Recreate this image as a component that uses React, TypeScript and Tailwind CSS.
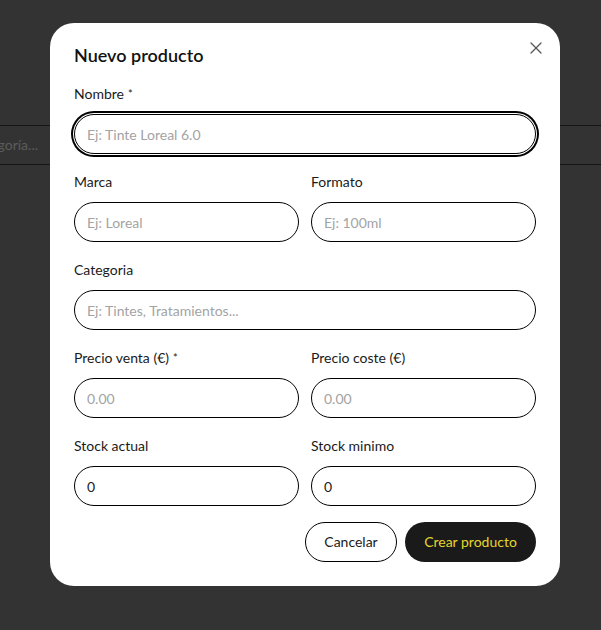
import { X } from "lucide-react";

const font = { fontFamily: "Lato, 'Open Sans', sans-serif" };

function Field({
  label,
  placeholder,
  value,
  required,
  focused,
}: {
  label: string;
  placeholder?: string;
  value?: string;
  required?: boolean;
  focused?: boolean;
}) {
  return (
    <div className="flex flex-col">
      <label className="mb-2.5 text-sm leading-5 text-[#1a1a1a]">
        {label}
        {required && <span className="ml-1 text-[11px] align-top">*</span>}
      </label>
      <input
        defaultValue={value}
        placeholder={placeholder}
        className={`h-10 w-full rounded-full border border-black bg-white px-3 text-sm text-[#222] placeholder:text-[#a3a3a3] outline-none ${
          focused ? "shadow-[0_0_0_1px_#fff,0_0_0_3px_#000]" : ""
        }`}
      />
    </div>
  );
}

export default function App() {
  return (
    <div className="relative h-[630px] w-full overflow-hidden bg-[#333333]" style={font}>
      {/* page behind the overlay */}
      <div className="mt-[125px] flex h-10 items-center border-y border-[#151515]">
        <div className="flex w-[38px] justify-end overflow-hidden">
          <span className="whitespace-nowrap text-sm text-[#5c5c5c]">
            Buscar por categoría...
          </span>
        </div>
      </div>

      {/* modal */}
      <div className="absolute left-[50px] top-[23px] w-[510px] rounded-3xl bg-white px-6 pb-6 pt-[22px]">
        <button className="absolute right-[10px] top-[11px] p-1 text-[#555]">
          <X size={20} strokeWidth={1.5} />
        </button>
        <h2 className="text-lg font-semibold leading-5 text-[#111]">Nuevo producto</h2>

        <form className="mt-[19px] flex flex-col gap-[18px]">
          <Field label="Nombre" required placeholder="Ej: Tinte Loreal 6.0" focused />
          <div className="grid grid-cols-2 gap-3">
            <Field label="Marca" placeholder="Ej: Loreal" />
            <Field label="Formato" placeholder="Ej: 100ml" />
          </div>
          <Field label="Categoria" placeholder="Ej: Tintes, Tratamientos..." />
          <div className="grid grid-cols-2 gap-3">
            <Field label="Precio venta (€)" required placeholder="0.00" />
            <Field label="Precio coste (€)" placeholder="0.00" />
          </div>
          <div className="grid grid-cols-2 gap-3">
            <Field label="Stock actual" value="0" />
            <Field label="Stock minimo" value="0" />
          </div>
        </form>

        <div className="mt-4 flex justify-end gap-2">
          <button className="h-10 w-[92px] rounded-full border border-black text-sm text-[#1a1a1a]">
            Cancelar
          </button>
          <button className="h-10 w-[131px] rounded-full bg-[#1a1a1a] text-sm text-[#e6d52c]">
            Crear producto
          </button>
        </div>
      </div>
    </div>
  );
}
